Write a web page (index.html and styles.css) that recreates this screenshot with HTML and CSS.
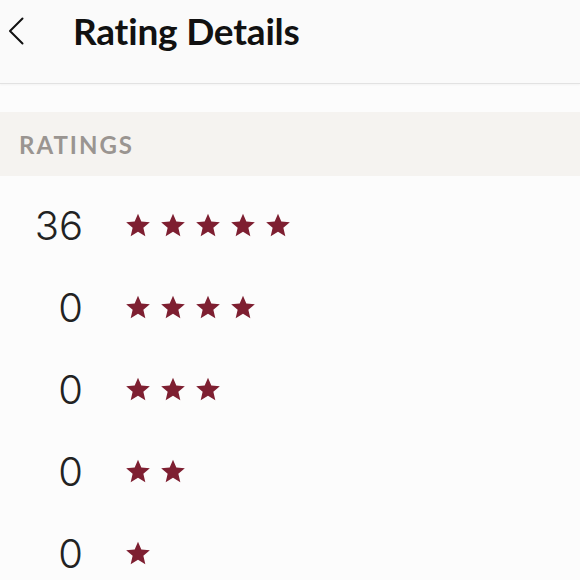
FILE: index.html
```html
<!DOCTYPE html>
<html lang="en">
<head>
  <meta charset="UTF-8">
  <meta name="viewport" content="width=device-width, initial-scale=1.0">
  <title>Rating Details</title>
  <link rel="stylesheet" href="styles.css">
</head>
<body>
  <header class="top-bar">
    <button class="back-button" aria-label="Back">
      <svg width="16" height="28" viewBox="0 0 16 28">
        <path d="M14.5 1.5 L2 14 L14.5 26.5" fill="none" stroke="#111" stroke-width="2" stroke-linecap="round" stroke-linejoin="round"/>
      </svg>
    </button>
    <h1 class="title">Rating Details</h1>
  </header>

  <div class="section-label">RATINGS</div>

  <ul class="rating-list" id="rating-list"></ul>

  <script>
    const ratings = [
      { stars: 5, count: 36 },
      { stars: 4, count: 0 },
      { stars: 3, count: 0 },
      { stars: 2, count: 0 },
      { stars: 1, count: 0 }
    ];

    const starSvg = '<svg class="star" viewBox="0 0 24 24"><path d="M12 1.5L15.06 8.79 22.94 9.45 16.95 14.61 18.76 22.3 12 18.2 5.24 22.3 7.05 14.61 1.06 9.45 8.94 8.79Z"/></svg>';

    const list = document.getElementById('rating-list');
    ratings.forEach((r) => {
      const row = document.createElement('li');
      row.className = 'rating-row';
      row.innerHTML = `<span class="count">${r.count}</span>
        <span class="stars">${starSvg.repeat(r.stars)}</span>`;
      list.appendChild(row);
    });
  </script>
</body>
</html>
```

FILE: styles.css
```css
* {
  margin: 0;
  padding: 0;
  box-sizing: border-box;
}

body {
  background-color: #fcfcfc;
  font-family: 'Lato', 'Noto Sans', sans-serif;
  color: #222;
}

.top-bar {
  display: flex;
  align-items: flex-start;
  height: 84px;
  padding-top: 9px;
  background-color: #fafafa;
  border-bottom: 1px solid #e2e2e2;
  box-shadow: 0 1px 2px rgba(0, 0, 0, 0.04);
}

.back-button {
  display: flex;
  width: 73px;
  padding: 8px 0 0 8px;
  border: none;
  background: none;
  cursor: pointer;
}

.title {
  font-size: 37px;
  line-height: 44px;
  font-weight: 700;
  color: #111;
  letter-spacing: -0.2px;
}

.section-label {
  margin-top: 28px;
  height: 64px;
  display: flex;
  align-items: center;
  padding-left: 19px;
  background-color: #f5f3f0;
  color: #9a9591;
  font-size: 24px;
  font-weight: 700;
  letter-spacing: 2px;
}

.rating-list {
  list-style: none;
  padding-top: 8px;
}

.rating-row {
  display: flex;
  align-items: center;
  height: 82px;
}

.count {
  width: 83px;
  text-align: right;
  font-family: 'Inter', 'Lato', sans-serif;
  font-size: 40px;
  font-weight: 300;
  color: #222;
}

.stars {
  display: flex;
  gap: 9px;
  margin-left: 42px;
}

.star {
  width: 26px;
  height: 26px;
  fill: #7e1f31;
}
```
